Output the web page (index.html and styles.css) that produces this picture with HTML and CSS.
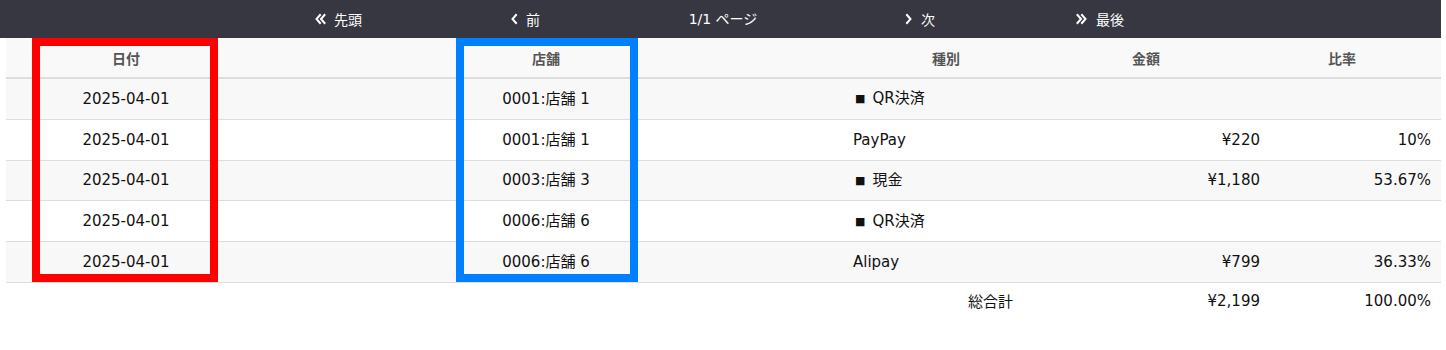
FILE: index.html
```html
<!DOCTYPE html>
<html lang="ja">
<head>
<meta charset="utf-8">
<title>決済種別</title>
<link rel="stylesheet" href="styles.css">
</head>
<body>
<div class="page">
  <nav class="pager">
    <a class="pager-item first"><svg class="ico" viewBox="0 0 12 12"><polyline points="6,2 2.5,6 6,10"/><polyline points="10.5,2 7,6 10.5,10"/></svg><span>先頭</span></a>
    <a class="pager-item prev"><svg class="ico ico-s" viewBox="0 0 8 12"><polyline points="6,2 2.5,6 6,10"/></svg><span>前</span></a>
    <span class="pager-item info">1/1 ページ</span>
    <a class="pager-item next"><svg class="ico ico-s" viewBox="0 0 8 12"><polyline points="2,2 5.5,6 2,10"/></svg><span>次</span></a>
    <a class="pager-item last"><svg class="ico" viewBox="0 0 12 12"><polyline points="1.5,2 5,6 1.5,10"/><polyline points="6,2 9.5,6 6,10"/></svg><span>最後</span></a>
  </nav>
  <div class="table-wrap">
    <table class="report">
      <colgroup>
        <col class="c-date"><col class="c-store"><col class="c-type"><col class="c-amount"><col class="c-ratio">
      </colgroup>
      <thead>
        <tr>
          <th>日付</th>
          <th>店舗</th>
          <th>種別</th>
          <th class="th-amount">金額</th>
          <th class="th-ratio">比率</th>
        </tr>
      </thead>
      <tbody>
        <tr class="odd">
          <td class="center">2025-04-01</td>
          <td class="center">0001:店舗 1</td>
          <td class="type"><span class="bullet">■</span>QR決済</td>
          <td class="num"></td>
          <td class="ratio"></td>
        </tr>
        <tr>
          <td class="center">2025-04-01</td>
          <td class="center">0001:店舗 1</td>
          <td class="type">PayPay</td>
          <td class="num">¥220</td>
          <td class="ratio">10%</td>
        </tr>
        <tr class="odd">
          <td class="center">2025-04-01</td>
          <td class="center">0003:店舗 3</td>
          <td class="type"><span class="bullet">■</span>現金</td>
          <td class="num">¥1,180</td>
          <td class="ratio">53.67%</td>
        </tr>
        <tr>
          <td class="center">2025-04-01</td>
          <td class="center">0006:店舗 6</td>
          <td class="type"><span class="bullet">■</span>QR決済</td>
          <td class="num"></td>
          <td class="ratio"></td>
        </tr>
        <tr class="odd">
          <td class="center">2025-04-01</td>
          <td class="center">0006:店舗 6</td>
          <td class="type">Alipay</td>
          <td class="num">¥799</td>
          <td class="ratio">36.33%</td>
        </tr>
      </tbody>
      <tfoot>
        <tr>
          <td></td>
          <td></td>
          <td class="total-label">総合計</td>
          <td class="num">¥2,199</td>
          <td class="ratio">100.00%</td>
        </tr>
      </tfoot>
    </table>
    <div class="mark mark-red"></div>
    <div class="mark mark-blue"></div>
  </div>
</div>
</body>
</html>
```

FILE: styles.css
```css
html, body {
  margin: 0;
  padding: 0;
  background: #ffffff;
}

body {
  font-family: "DejaVu Sans", "Noto Sans CJK JP", sans-serif;
  color: #111111;
}

.page {
  width: 1441px;
}

.pager {
  height: 38px;
  background: #373741;
  display: flex;
  align-items: center;
  padding-left: 288px;
  color: #ffffff;
  font-size: 14px;
  line-height: 20px;
}

.pager-item {
  width: 100px;
  display: flex;
  justify-content: center;
  align-items: center;
  gap: 8px;
  color: #ffffff;
  text-decoration: none;
}

.pager-item span {
  font-family: "Noto Sans CJK JP", sans-serif;
}

.pager .prev { margin-left: 87px; }
.pager .info { margin-left: 98px; }
.pager .next { margin-left: 97px; }
.pager .last { margin-left: 80px; }

.ico {
  width: 12px;
  height: 12px;
  fill: none;
  stroke: #ffffff;
  stroke-width: 2;
  stroke-linecap: square;
}

.ico-s {
  width: 8px;
}

.table-wrap {
  position: relative;
  margin-left: 6px;
}

.report {
  width: 1435px;
  table-layout: fixed;
  border-collapse: collapse;
  font-size: 15px;
}

.c-date { width: 240px; }
.c-store { width: 600px; }
.c-type { width: 200px; }
.c-amount { width: 222px; }
.c-ratio { width: 173px; }

.report th {
  height: 39px;
  padding: 0;
  line-height: 20px;
  background: #f9f9f9;
  border-bottom: 2px solid #dddddd;
  font-family: "Noto Sans CJK JP", sans-serif;
  font-size: 14px;
  font-weight: bold;
  color: #555555;
  text-align: center;
}

.report .th-amount { padding-right: 22px; }
.report .th-ratio { padding-right: 25px; }

.report tbody td {
  height: 39.75px;
  padding: 0;
  line-height: 20px;
  border-bottom: 1px solid #dddddd;
  background: #ffffff;
  white-space: nowrap;
}

.report tbody tr.odd td {
  background: #f8f8f8;
}

.report .center { text-align: center; }

.report .type {
  text-align: left;
  padding-left: 7px;
}

.bullet {
  display: inline-block;
  font-size: 11px;
  margin-left: 2px;
  margin-right: 7px;
  vertical-align: 1px;
}

.report .num {
  text-align: right;
  padding-right: 8px;
}

.report .ratio {
  text-align: right;
  padding-right: 10px;
}

.report tfoot td {
  height: 37px;
  padding-top: 0;
  padding-bottom: 0;
  line-height: 20px;
  background: #ffffff;
}

.report .total-label {
  text-align: right;
  padding-right: 33px;
  font-family: "Noto Sans CJK JP", sans-serif;
}

.mark {
  position: absolute;
  top: 0;
  height: 244px;
  box-sizing: border-box;
  border: 8px solid;
  pointer-events: none;
}

.mark-red {
  left: 26px;
  width: 186px;
  border-color: #ff0000;
}

.mark-blue {
  left: 450px;
  width: 182px;
  border-color: #0080ff;
}
```
